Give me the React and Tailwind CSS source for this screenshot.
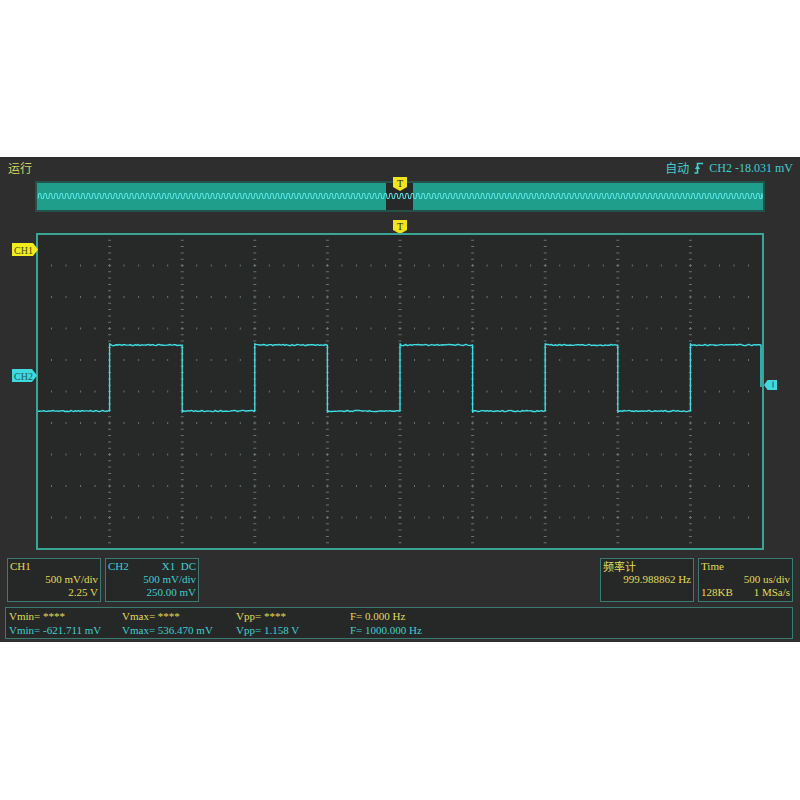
import React from "react";

const GX = 37;
const GY = 234;
const GW = 726;
const GH = 315;
const DX = GW / 10;
const DY = GH / 10;
const HIGH = 345;
const LOW = 411;

function rnd(i) {
  const s = Math.sin(i * 12.9898 + 78.233) * 43758.5453;
  return s - Math.floor(s);
}

function buildGrid() {
  let d = "";
  // dotted minor marks along each horizontal division row
  for (let j = 1; j < 10; j++) {
    const y = GY + j * DY;
    for (let k = 1; k < 50; k++) {
      if (k % 5 === 0) continue;
      const x = GX + (k * DX) / 5;
      d += `M${(x - 0.5).toFixed(2)} ${(y - 1).toFixed(2)}h1v2h-1z`;
    }
  }
  // tick marks along each vertical division line
  for (let i = 1; i < 10; i++) {
    const x = GX + i * DX;
    for (let k = 1; k < 50; k++) {
      const y = GY + (k * DY) / 5;
      d += `M${(x - 1.5).toFixed(2)} ${(y - 0.5).toFixed(2)}h3v1h-3z`;
      if (k % 5 === 0) d += `M${(x - 0.5).toFixed(2)} ${(y - 1.5).toFixed(2)}h1v3h-1z`;
    }
  }
  return d;
}

function buildTrace() {
  let d = `M${GX + 1} ${LOW}`;
  let seed = 1;
  for (let n = 0; n < 10; n++) {
    const x0 = GX + n * DX;
    const x1 = n === 9 ? GX + GW - 2 : GX + (n + 1) * DX;
    const level = n % 2 === 0 ? LOW : HIGH;
    const start = n === 0 ? GX + 1 : x0;
    d += `L${start.toFixed(2)} ${level + (n > 0 ? (level === HIGH ? -1.2 : 1.2) : 0)}`;
    for (let x = start + 1.5; x < x1; x += 1.5) {
      const y = level + (rnd(seed++) - 0.5) * 1.3;
      d += `L${x.toFixed(2)} ${y.toFixed(2)}`;
    }
    d += `L${x1.toFixed(2)} ${level}`;
    if (n === 9) d += `L${x1.toFixed(2)} 387`;
  }
  return d;
}

function buildOverview() {
  const top = 193.5;
  const bot = 198.5;
  const p = 5.4;
  let d = `M38 ${bot}`;
  for (let x = 38; x < 762; x += p) {
    const a = Math.min(x + p * 0.15, 762);
    const b = Math.min(x + p * 0.5, 762);
    const c = Math.min(x + p * 0.65, 762);
    const e = Math.min(x + p, 762);
    d += `L${a.toFixed(2)} ${top}L${b.toFixed(2)} ${top}L${c.toFixed(2)} ${bot}L${e.toFixed(2)} ${bot}`;
  }
  return d;
}

const GRID = buildGrid();
const TRACE = buildTrace();
const OVERVIEW = buildOverview();

function TrigMarker({ y }) {
  return (
    <g>
      <polygon points={`393,${y} 407,${y} 407,${y + 10} 400,${y + 14} 393,${y + 10}`} fill="#f2e41a" />
      <text x="400" y={y + 9.5} textAnchor="middle" fontSize="10" fontFamily="Liberation Serif, serif" fill="#2a2a10">
        T
      </text>
    </g>
  );
}

function EdgeIcon() {
  return (
    <svg width="10" height="12" viewBox="0 0 10 12" className="mx-[5px]">
      <path d="M0.5 11H3.5V1.5H9" fill="none" stroke="#3fcfcf" strokeWidth="1.6" />
      <path d="M3.5 3.5L0.8 7H6.2Z" fill="#3fcfcf" />
    </svg>
  );
}

function Scope() {
  return (
    <svg width="800" height="380" viewBox="0 176 800 380" className="block">
      {/* memory overview strip */}
      <rect x="35" y="181" width="730" height="31" fill="#24524b" />
      <rect x="37" y="183" width="726" height="27" fill="#1f9f8b" />
      <rect x="386" y="183" width="27" height="27" fill="#272929" />
      <path d={OVERVIEW} fill="none" stroke="#5ae8ea" strokeWidth="1" />
      <TrigMarker y={177} />
      <TrigMarker y={220} />

      {/* graticule */}
      <rect x={GX} y={GY} width={GW} height={GH} fill="#272929" stroke="#3aa594" strokeWidth="2" />
      <path d={GRID} fill="#687272" />

      {/* channel trace */}
      <path d={TRACE} fill="none" stroke="#3fdde2" strokeWidth="1.4" strokeLinejoin="round" />

      {/* channel markers */}
      <polygon points="12,243 33,243 38,249.5 33,256 12,256" fill="#f3ec1c" />
      <text x="14" y="253.5" fontSize="10" fontFamily="Liberation Serif, serif" fill="#4a4a20">
        CH1
      </text>
      <polygon points="12,369 32,369 37,375.5 32,382 12,382" fill="#3fd9de" />
      <text x="14" y="379.5" fontSize="10" fontFamily="Liberation Serif, serif" fill="#1f5a5c">
        CH2
      </text>
      <polygon points="764,385 767.5,380 777,380 777,390 767.5,390" fill="#3fd9de" />
      <rect x="772.5" y="381.5" width="1" height="6" fill="#1f5a5c" />
    </svg>
  );
}

function InfoBox({ className, children }) {
  return (
    <div className={`border border-[#3b7a73] bg-[#262828] px-[2px] pt-[1px] text-[11px] leading-[13px] ${className}`}>
      {children}
    </div>
  );
}

export default function App() {
  return (
    <div
      className="w-[800px] h-[800px] bg-white pt-[157px]"
      style={{ fontFamily: '"Liberation Serif", "Noto Sans CJK SC", serif' }}
    >
      <div className="h-[485px] bg-[#2e2e2e] flex flex-col">
        <div className="h-[19px] flex items-center justify-between pl-[8px] pr-[7px] pt-[3px] text-[12px]">
          <span className="text-[#d4d45a]" style={{ fontFamily: '"Noto Sans CJK SC", sans-serif' }}>
            运行
          </span>
          <div className="flex items-center text-[#3fcfcf]">
            <span style={{ fontFamily: '"Noto Sans CJK SC", sans-serif' }}>自动</span>
            <EdgeIcon />
            <span>CH2 -18.031 mV</span>
          </div>
        </div>

        <Scope />

        <div className="mt-[2px] flex h-[44px]">
          <InfoBox className="ml-[7px] w-[94px] text-[#e0dc55]">
            <div>CH1</div>
            <div className="text-right">500 mV/div</div>
            <div className="text-right">2.25 V</div>
          </InfoBox>
          <InfoBox className="ml-[4px] w-[94px] text-[#3fcfcf]">
            <div className="flex justify-between">
              <span>CH2</span>
              <span>X1&nbsp;&nbsp;DC</span>
            </div>
            <div className="text-right">500 mV/div</div>
            <div className="text-right">250.00 mV</div>
          </InfoBox>
          <InfoBox className="ml-auto w-[94px] text-[#e0dc55]">
            <div style={{ fontFamily: '"Noto Sans CJK SC", sans-serif' }} className="text-[11px] leading-[13px]">
              频率计
            </div>
            <div className="text-right">999.988862 Hz</div>
          </InfoBox>
          <InfoBox className="ml-[4px] mr-[7px] w-[95px] text-[#e0dc55]">
            <div>Time</div>
            <div className="text-right">500 us/div</div>
            <div className="flex justify-between">
              <span>128KB</span>
              <span>1 MSa/s</span>
            </div>
          </InfoBox>
        </div>

        <div className="ml-[5px] mr-[7px] mt-[5px] h-[32px] border border-[#3b7a73] bg-[#262828] pl-[3px] pt-[2px] text-[11px] leading-[13px] grid grid-cols-[113px_114px_114px_1fr]">
          <div className="text-[#e0dc55]">Vmin= ****</div>
          <div className="text-[#e0dc55]">Vmax= ****</div>
          <div className="text-[#e0dc55]">Vpp= ****</div>
          <div className="text-[#e0dc55]">F= 0.000 Hz</div>
          <div className="text-[#3fcfcf]">Vmin= -621.711 mV</div>
          <div className="text-[#3fcfcf]">Vmax= 536.470 mV</div>
          <div className="text-[#3fcfcf]">Vpp= 1.158 V</div>
          <div className="text-[#3fcfcf]">F= 1000.000 Hz</div>
        </div>
      </div>
    </div>
  );
}
